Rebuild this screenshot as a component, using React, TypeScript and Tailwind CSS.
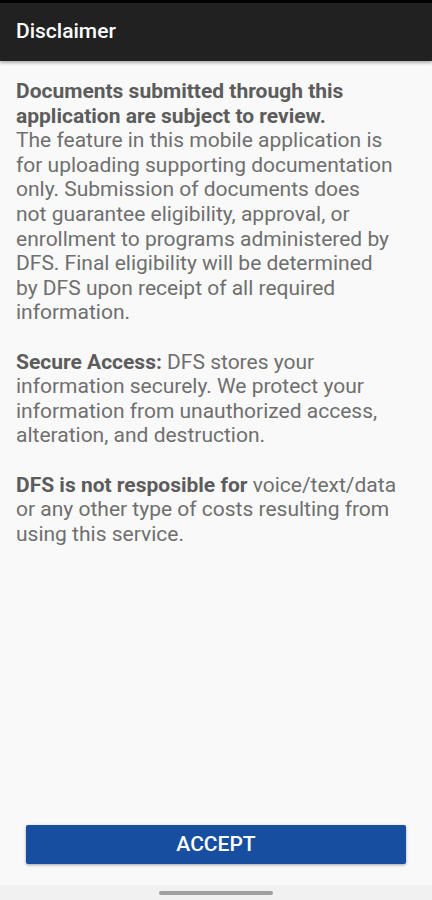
export default function App() {
  return (
    <div
      className="h-[900px] w-[432px] flex flex-col bg-[#f9f9f9] overflow-hidden"
      style={{ fontFamily: 'Roboto, "Noto Sans", sans-serif' }}
    >
      {/* status strip + toolbar */}
      <div className="h-[3px] bg-black" />
      <div className="h-[58px] bg-[#212121] flex items-center px-4 shadow-[0_2px_3px_rgba(0,0,0,0.3)] relative">
        <h1 className="text-[21px] font-medium text-white">Disclaimer</h1>
      </div>

      {/* body */}
      <div className="flex-1 pl-4 pr-7 pt-[18px] text-[21px] leading-[24.6px] text-[#6f6f6f]">
        <p>
          <span className="font-bold text-[#5c5c5c]">Documents submitted through this application are subject to review.</span>
          <br />
          The feature in this mobile application is for uploading supporting documentation only. Submission of documents does
          <br />
          not guarantee eligibility, approval, or enrollment to programs administered by DFS. Final eligibility will be determined
          <br />
          by DFS upon receipt of all required information.
        </p>
        <p className="mt-[24.6px]">
          <span className="font-bold text-[#5c5c5c]">Secure Access:</span> DFS stores your information securely. We protect your information from unauthorized access, alteration, and destruction.
        </p>
        <p className="mt-[24.6px]">
          <span className="font-bold text-[#5c5c5c]">DFS is not resposible for</span> voice/text/data or any other type of costs resulting from using this service.
        </p>
      </div>

      {/* accept */}
      <div className="px-[26px] pb-[21px]">
        <button className="w-full h-[39px] bg-[#174ea0] rounded-[2px] shadow-[0_1px_3px_rgba(0,0,0,0.35)] text-white text-[21px] font-medium">
          ACCEPT
        </button>
      </div>

      {/* nav handle */}
      <div className="h-[15px] bg-[#f1f1f1] flex justify-center pt-[6px]">
        <div className="w-[114px] h-[4px] rounded-full bg-[#a0a0a0]" />
      </div>
    </div>
  );
}
